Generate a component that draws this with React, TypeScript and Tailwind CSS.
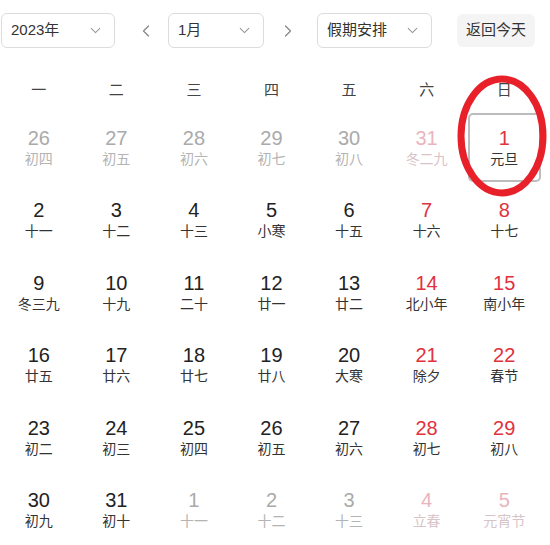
import { ChevronDown, ChevronLeft, ChevronRight } from "lucide-react";

type Day = { d: number; l: string; muted?: boolean; red?: boolean; selected?: boolean };

const weeks: Day[][] = [
  [
    { d: 26, l: "初四", muted: true },
    { d: 27, l: "初五", muted: true },
    { d: 28, l: "初六", muted: true },
    { d: 29, l: "初七", muted: true },
    { d: 30, l: "初八", muted: true },
    { d: 31, l: "冬二九", muted: true, red: true },
    { d: 1, l: "元旦", red: true, selected: true },
  ],
  [
    { d: 2, l: "十一" },
    { d: 3, l: "十二" },
    { d: 4, l: "十三" },
    { d: 5, l: "小寒" },
    { d: 6, l: "十五" },
    { d: 7, l: "十六", red: true },
    { d: 8, l: "十七", red: true },
  ],
  [
    { d: 9, l: "冬三九" },
    { d: 10, l: "十九" },
    { d: 11, l: "二十" },
    { d: 12, l: "廿一" },
    { d: 13, l: "廿二" },
    { d: 14, l: "北小年", red: true },
    { d: 15, l: "南小年", red: true },
  ],
  [
    { d: 16, l: "廿五" },
    { d: 17, l: "廿六" },
    { d: 18, l: "廿七" },
    { d: 19, l: "廿八" },
    { d: 20, l: "大寒" },
    { d: 21, l: "除夕", red: true },
    { d: 22, l: "春节", red: true },
  ],
  [
    { d: 23, l: "初二" },
    { d: 24, l: "初三" },
    { d: 25, l: "初四" },
    { d: 26, l: "初五" },
    { d: 27, l: "初六" },
    { d: 28, l: "初七", red: true },
    { d: 29, l: "初八", red: true },
  ],
  [
    { d: 30, l: "初九" },
    { d: 31, l: "初十" },
    { d: 1, l: "十一", muted: true },
    { d: 2, l: "十二", muted: true },
    { d: 3, l: "十三", muted: true },
    { d: 4, l: "立春", muted: true, red: true },
    { d: 5, l: "元宵节", muted: true, red: true },
  ],
];

const weekdays = ["一", "二", "三", "四", "五", "六", "日"];

function Select({ label, w }: { label: string; w: string }) {
  return (
    <div
      className={`${w} h-[35px] flex items-center justify-between pl-[9px] pr-[10px] border border-[#dcdcdc] rounded-[6px] bg-white text-[15px] text-[#333]`}
    >
      <span>{label}</span>
      <ChevronDown className="size-[17px] text-[#999]" strokeWidth={1.5} />
    </div>
  );
}

function Cell({ day }: { day: Day }) {
  let num = "text-[#222]";
  let lun = "text-[#333]";
  if (day.muted && day.red) {
    num = "text-[#eab4bd]";
    lun = "text-[#d8c4c8]";
  } else if (day.muted) {
    num = "text-[#aaaaaa]";
    lun = "text-[#b4b4b4]";
  } else if (day.red) {
    num = "text-[#e0323e]";
  }
  return (
    <div className="flex items-center justify-center h-[72.5px]">
      <div
        className={`w-[73px] h-[69px] flex flex-col items-center justify-center rounded-[5px] ${
          day.selected ? "border-2 border-[#bcbcbc]" : ""
        }`}
      >
        <span className={`text-[20px] leading-[22px] ${num}`}>{day.d}</span>
        <span className={`text-[14px] leading-[18px] mt-[1px] ${lun}`}>{day.l}</span>
      </div>
    </div>
  );
}

export default function App() {
  return (
    <div
      className="relative w-[550px] h-[545px] bg-white overflow-hidden"
      style={{ fontFamily: '"Liberation Sans", "Noto Sans CJK SC", sans-serif' }}
    >
      <div className="flex items-center h-[35px] mt-[13px] pl-[1px]">
        <Select label="2023年" w="w-[114px]" />
        <ChevronLeft className="size-[20px] text-[#888] ml-[21px]" strokeWidth={1.5} />
        <div className="ml-[12px]">
          <Select label="1月" w="w-[96px]" />
        </div>
        <ChevronRight className="size-[20px] text-[#888] ml-[14px]" strokeWidth={1.5} />
        <div className="ml-[19px]">
          <Select label="假期安排" w="w-[115px]" />
        </div>
        <div className="ml-[25px] h-[33px] px-[9px] flex items-center rounded-[6px] bg-[#f4f4f4] text-[15px] text-[#333]">
          返回今天
        </div>
      </div>

      <div className="w-[543px] grid grid-cols-7 mt-[27px]">
        {weekdays.map((w) => (
          <div key={w} className="h-[30px] flex items-center justify-center text-[15px] text-[#444]">
            {w}
          </div>
        ))}
      </div>

      <div className="w-[543px] grid grid-cols-7 mt-[6px]">
        {weeks.flat().map((day, i) => (
          <Cell key={i} day={day} />
        ))}
      </div>

      <svg className="absolute left-[452px] top-[71px]" width="100" height="130" viewBox="0 0 100 130">
        <ellipse cx="50" cy="65" rx="41" ry="57" fill="none" stroke="#e8202a" strokeWidth="7" />
      </svg>
    </div>
  );
}
